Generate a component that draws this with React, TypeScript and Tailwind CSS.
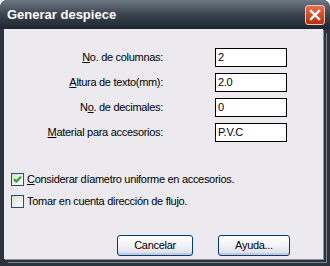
import React from "react";

const U = ({ c }: { c: string }) => <span className="underline underline-offset-[1px]">{c}</span>;

const rows: { label: React.ReactNode; value: string }[] = [
  { label: <><U c="N" />o. de columnas:</>, value: "2" },
  { label: <><U c="A" />ltura de texto(mm):</>, value: "2.0" },
  { label: <>N<U c="o" />. de decimales:</>, value: "0" },
  { label: <><U c="M" />aterial para accesorios:</>, value: "P.V.C" },
];

function Check({ checked }: { checked: boolean }) {
  return (
    <div className="w-[13px] h-[13px] border border-[#1c5180] bg-gradient-to-br from-[#dcdcd6] to-[#ffffff] flex items-center justify-center shrink-0">
      {checked && (
        <svg width="9" height="9" viewBox="0 0 9 9">
          <path d="M1 4.2 L3.3 6.5 L8 1.8" stroke="#21a121" strokeWidth="2" fill="none" />
        </svg>
      )}
    </div>
  );
}

function Btn({ w, children }: { w: string; children: React.ReactNode }) {
  return (
    <div
      className={`${w} h-[21px] rounded-[3px] border border-[#003c74] bg-gradient-to-b from-[#ffffff] via-[#f3f3f6] to-[#d9dce6] shadow-[inset_0_-2px_0_#c6cad8] flex items-center justify-center text-[11px] tracking-[-0.3px] text-black`}
    >
      {children}
    </div>
  );
}

export default function App() {
  return (
    <div
      className="w-[330px] h-[266px] bg-[#2b333e] rounded-t-[7px] overflow-hidden flex flex-col"
      style={{ fontFamily: '"Liberation Sans", Arial, sans-serif' }}
    >
      <div className="h-[29px] shrink-0 bg-gradient-to-b from-[#6d7883] via-[#3a4550] to-[#1d2530] flex items-center justify-between pl-[7px] pr-[5px]">
        <span className="text-white font-bold text-[13px] leading-none">Generar despiece</span>
        <div className="w-[20px] h-[20px] rounded-[3px] border border-[#f4c4b4] bg-gradient-to-b from-[#e8714f] via-[#d24a24] to-[#b9300f] flex items-center justify-center">
          <svg width="12" height="12" viewBox="0 0 12 12">
            <path d="M2 2 L10 10 M10 2 L2 10" stroke="#ffffff" strokeWidth="2.4" strokeLinecap="square" />
          </svg>
        </div>
      </div>
      <div className="flex-1 ml-[4px] mr-[7px] mb-[7px] bg-[#eceaef] shadow-[1px_1px_0_#8a929c,3px_3px_0_#2b333e,4px_4px_0_#7d858e] flex flex-col text-[11px] tracking-[-0.3px] text-black">
        <div className="pt-[19px] grid grid-cols-[159px_72px] gap-x-[52px] gap-y-[6px]">
          {rows.map((r, i) => (
            <React.Fragment key={i}>
              <div className="text-right h-[19px] flex items-center justify-end leading-none">{r.label}</div>
              <div className="h-[19px] border border-black bg-white flex items-center pl-[2px] leading-none">{r.value}</div>
            </React.Fragment>
          ))}
        </div>
        <div className="mt-[31px] pl-[7px] flex flex-col gap-[9px]">
          <div className="flex items-center gap-[3px]">
            <Check checked />
            <span className="leading-none"><U c="C" />onsiderar díametro uniforme en accesorios.</span>
          </div>
          <div className="flex items-center gap-[3px]">
            <Check checked={false} />
            <span className="leading-none">Tomar en cuenta dirección de flujo.</span>
          </div>
        </div>
        <div className="mt-[27px] pl-[113px] flex gap-[25px]">
          <Btn w="w-[76px]">Cancelar</Btn>
          <Btn w="w-[72px]">Ayuda...</Btn>
        </div>
      </div>
    </div>
  );
}
